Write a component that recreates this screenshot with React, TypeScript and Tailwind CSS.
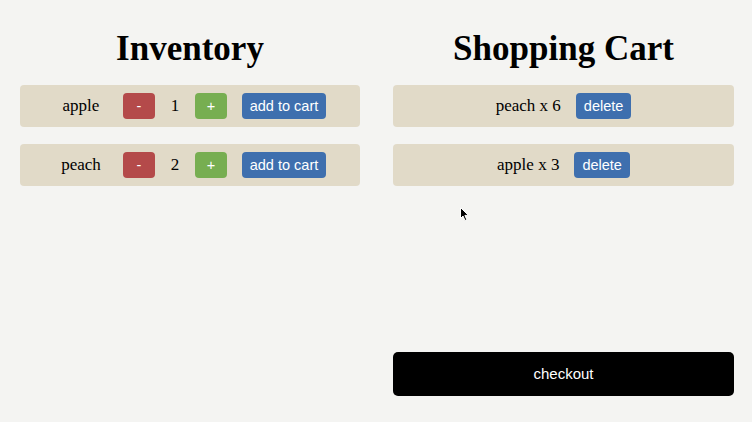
import React from "react";

const inventory = [
  { name: "apple", qty: 1 },
  { name: "peach", qty: 2 },
];

const cart = [
  { name: "peach", qty: 6 },
  { name: "apple", qty: 3 },
];

const btn =
  "h-[26px] rounded-[4px] text-white text-[14.5px] leading-none flex items-center justify-center [font-family:'Liberation_Sans',Arial,sans-serif]";

export default function App() {
  return (
    <div className="relative h-[422px] w-full bg-[#f4f4f2] text-black [font-family:'Liberation_Serif','Times_New_Roman',serif] text-[17px] overflow-hidden">
      <div className="grid grid-cols-[340px_341px] gap-[33px] pl-5 h-full">
        {/* Inventory */}
        <div className="flex flex-col pt-[29px]">
          <h1 className="text-[35px] font-bold leading-[39px] text-center mb-[17px]">Inventory</h1>
          <div className="flex flex-col gap-[17px]">
            {inventory.map((item) => (
              <div
                key={item.name}
                className="h-[42px] rounded-[4px] bg-[#e1dac8] flex items-center justify-center gap-[15px]"
              >
                <span className="w-[54px] text-center">{item.name}</span>
                <button className={`${btn} w-8 bg-[#b44a4a]`}>-</button>
                <span className="w-[10px] text-center">{item.qty}</span>
                <button className={`${btn} w-8 bg-[#77ae51]`}>+</button>
                <button className={`${btn} w-[84px] bg-[#3e6fae]`}>add to cart</button>
              </div>
            ))}
          </div>
        </div>

        {/* Cart */}
        <div className="flex flex-col pt-[29px] pb-[26px]">
          <h1 className="text-[35px] font-bold leading-[39px] text-center mb-[17px]">Shopping Cart</h1>
          <div className="flex flex-col gap-[17px]">
            {cart.map((item) => (
              <div
                key={item.name}
                className="h-[42px] rounded-[4px] bg-[#e1dac8] flex items-center justify-center gap-[15px]"
              >
                <span>
                  {item.name} x {item.qty}
                </span>
                <button className={`${btn} px-2 bg-[#3e6fae]`}>delete</button>
              </div>
            ))}
          </div>
          <button className="mt-auto h-[44px] w-full rounded-[5px] bg-black text-white text-[15px] [font-family:'Liberation_Sans',Arial,sans-serif]">
            checkout
          </button>
        </div>
      </div>

      {/* mouse pointer */}
      <svg className="absolute left-[460px] top-[207px]" width="10" height="15" viewBox="0 0 10 15">
        <path d="M0.5 0.5 L0.5 11.5 L3 9 L5 13.5 L6.8 12.7 L4.9 8.4 L8.5 8.4 Z" fill="#000" stroke="#fff" strokeWidth="1" />
      </svg>
    </div>
  );
}
